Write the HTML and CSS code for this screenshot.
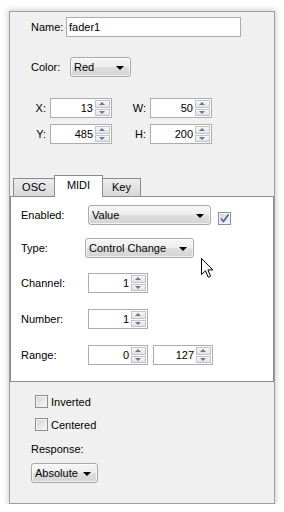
FILE: index.html
```html
<!DOCTYPE html>
<html lang="en">
<head>
    <meta charset="UTF-8">
    <title>Fader Properties</title>
    <link rel="stylesheet" href="styles.css">
</head>
<body>
    <div class="panel">
        <div class="row name-row">
            <span class="lbl lbl-name">Name:</span>
            <span class="field">fader1</span>
        </div>
        <div class="row color-row">
            <span class="lbl lbl-color">Color:</span>
            <span class="combo combo-color">Red</span>
        </div>

        <div class="row xy-row first">
            <span class="xlbl">X:</span>
            <span class="spin spin-wide"><span class="num">13</span><span class="btns"><i class="up"></i><i class="dn"></i></span></span>
            <span class="xlbl second">W:</span>
            <span class="spin spin-wide"><span class="num">50</span><span class="btns"><i class="up"></i><i class="dn"></i></span></span>
        </div>
        <div class="row xy-row">
            <span class="xlbl">Y:</span>
            <span class="spin spin-wide"><span class="num">485</span><span class="btns"><i class="up"></i><i class="dn"></i></span></span>
            <span class="xlbl second">H:</span>
            <span class="spin spin-wide"><span class="num">200</span><span class="btns"><i class="up"></i><i class="dn"></i></span></span>
        </div>

        <div class="tabbar">
            <span class="tab tab-osc">OSC</span>
            <span class="tab tab-midi active">MIDI</span>
            <span class="tab tab-key">Key</span>
        </div>
        <div class="pane">
            <div class="prow enabled-row">
                <span class="plbl">Enabled:</span>
                <span class="combo combo-value">Value</span>
                <span class="check checked">
                    <svg width="11" height="11" viewBox="0 0 11 11"><polyline points="2,5.5 4.5,8.5 9.5,1.5" fill="none" stroke="#4a62a6" stroke-width="1.6"/></svg>
                </span>
            </div>
            <div class="prow type-row">
                <span class="plbl short">Type:</span>
                <span class="combo combo-type">Control Change</span>
            </div>
            <div class="prow spaced">
                <span class="plbl">Channel:</span>
                <span class="spin"><span class="num">1</span><span class="btns"><i class="up"></i><i class="dn"></i></span></span>
            </div>
            <div class="prow spaced">
                <span class="plbl">Number:</span>
                <span class="spin"><span class="num">1</span><span class="btns"><i class="up"></i><i class="dn"></i></span></span>
            </div>
            <div class="prow spaced">
                <span class="plbl">Range:</span>
                <span class="spin"><span class="num">0</span><span class="btns"><i class="up"></i><i class="dn"></i></span></span>
                <span class="spin range-max"><span class="num">127</span><span class="btns"><i class="up"></i><i class="dn"></i></span></span>
            </div>
            <svg class="cursor" width="13" height="21" viewBox="0 0 13 21">
                <path d="M0.5,0.5 L0.5,16.5 L4.5,12.8 L7.2,19.3 L9.6,18.3 L6.9,11.9 L11.8,11.9 Z" fill="#fff" stroke="#000" stroke-width="1"/>
            </svg>
        </div>

        <div class="crow first">
            <span class="check"></span>
            <span class="ctext">Inverted</span>
        </div>
        <div class="crow">
            <span class="check"></span>
            <span class="ctext">Centered</span>
        </div>
        <div class="resp-label">Response:</div>
        <div class="row resp-row">
            <span class="combo combo-resp">Absolute</span>
        </div>
    </div>
</body>
</html>
```

FILE: styles.css
```css
body {
    margin: 0;
    background-color: #fff;
    font-family: "Liberation Sans", Arial, sans-serif;
    font-size: 11px;
    color: #000;
}

.panel {
    position: relative;
    margin: 11px 0 0 9px;
    width: 264px;
    height: 491px;
    border: 1px solid #9d9d9d;
    background-color: #f0f0f0;
    box-shadow: 0 0 6px 1px rgba(0, 0, 0, 0.2);
}

.row {
    display: flex;
    align-items: center;
    height: 20px;
    padding-left: 21px;
}

.name-row {
    margin-top: 5px;
}

.lbl-name {
    width: 35px;
}

.color-row {
    margin-top: 20px;
}

.lbl-color {
    width: 39px;
}

.field {
    box-sizing: border-box;
    width: 175px;
    height: 20px;
    line-height: 18px;
    padding-left: 2px;
    border: 1px solid #abadb3;
    background-color: #fff;
}

/* combo boxes */
.combo {
    position: relative;
    box-sizing: border-box;
    height: 20px;
    line-height: 18px;
    padding-left: 3px;
    border: 1px solid #a9a9a9;
    border-radius: 3px;
    background: linear-gradient(#f6f6f6, #ededed 50%, #dfdfdf 50%, #d3d3d3);
    box-shadow: inset 0 0 0 1px rgba(255, 255, 255, 0.7);
}

.combo::after {
    content: "";
    position: absolute;
    right: 6px;
    top: 8px;
    border-left: 4px solid transparent;
    border-right: 4px solid transparent;
    border-top: 4px solid #000;
}

.combo-color {
    width: 61px;
}

.combo-value {
    width: 123px;
}

.combo-type {
    width: 109px;
}

.combo-resp {
    width: 67px;
}

/* spin boxes */
.spin {
    box-sizing: border-box;
    display: flex;
    width: 60px;
    height: 20px;
    border: 1px solid #abadb3;
    background-color: #fff;
}

.spin-wide {
    width: 62px;
}

.num {
    flex: 1;
    text-align: right;
    line-height: 18px;
    padding-right: 2px;
}

.btns {
    display: flex;
    flex-direction: column;
    gap: 1px;
    width: 15px;
    padding: 1px 1px 1px 0;
}

.btns i {
    position: relative;
    flex: 1;
    border: 1px solid #c4c4c4;
    background: linear-gradient(#f7f7f7, #e3e3e3);
}

.btns i::after {
    content: "";
    position: absolute;
    left: 3px;
    top: 1px;
    border-left: 3px solid transparent;
    border-right: 3px solid transparent;
}

.btns .up::after {
    border-bottom: 3px solid #6478a8;
}

.btns .dn::after {
    border-top: 3px solid #6478a8;
}

.xy-row {
    margin-top: 6px;
}

.xy-row.first {
    margin-top: 21px;
}

.xlbl {
    width: 19px;
    padding-right: 4px;
    box-sizing: border-box;
    text-align: right;
}

.xlbl.second {
    width: 38px;
}

/* tabs */
.tabbar {
    display: flex;
    align-items: flex-end;
    height: 21px;
    margin-top: 31px;
    padding-left: 3px;
}

.tab {
    box-sizing: border-box;
    height: 18px;
    line-height: 17px;
    text-align: center;
    border: 1px solid #898c95;
    border-bottom: none;
    background: linear-gradient(#ececec, #d9d9d9);
}

.tab-osc {
    width: 42px;
}

.tab-midi {
    width: 49px;
    margin-left: -1px;
}

.tab-key {
    width: 39px;
    margin-left: -1px;
}

.tab.active {
    position: relative;
    z-index: 1;
    height: 22px;
    line-height: 19px;
    margin-bottom: -1px;
    background: #fff;
}

.pane {
    position: relative;
    box-sizing: border-box;
    height: 186px;
    padding-top: 8px;
    border: 1px solid #898c95;
    background-color: #fff;
}

.prow {
    display: flex;
    align-items: center;
    height: 20px;
    padding-left: 10px;
}

.plbl {
    width: 67px;
}

.plbl.short {
    width: 64px;
}

.type-row {
    margin-top: 13px;
}

.prow.spaced {
    margin-top: 15px;
}

.prow.spaced + .prow.spaced {
    margin-top: 16px;
}

.range-max {
    margin-left: 5px;
}

.enabled-row .check {
    align-self: flex-start;
    margin: 7px 0 0 7px;
}

/* checkboxes */
.check {
    box-sizing: border-box;
    display: inline-block;
    width: 13px;
    height: 13px;
    border: 1px solid #8e8f8f;
    background: linear-gradient(135deg, #d2d4d8, #f7f7f7);
    box-shadow: inset 0 0 0 1px #f4f4f4;
}

.check svg {
    display: block;
    margin: 0;
}

.crow {
    display: flex;
    align-items: center;
    height: 13px;
    margin-top: 10px;
    padding-left: 25px;
}

.crow.first {
    margin-top: 13px;
}

.ctext {
    margin-left: 3px;
}

.resp-label {
    height: 14px;
    line-height: 14px;
    margin-top: 11px;
    padding-left: 21px;
}

.resp-row {
    margin-top: 7px;
}

.cursor {
    position: absolute;
    left: 190px;
    top: 61px;
}
```
